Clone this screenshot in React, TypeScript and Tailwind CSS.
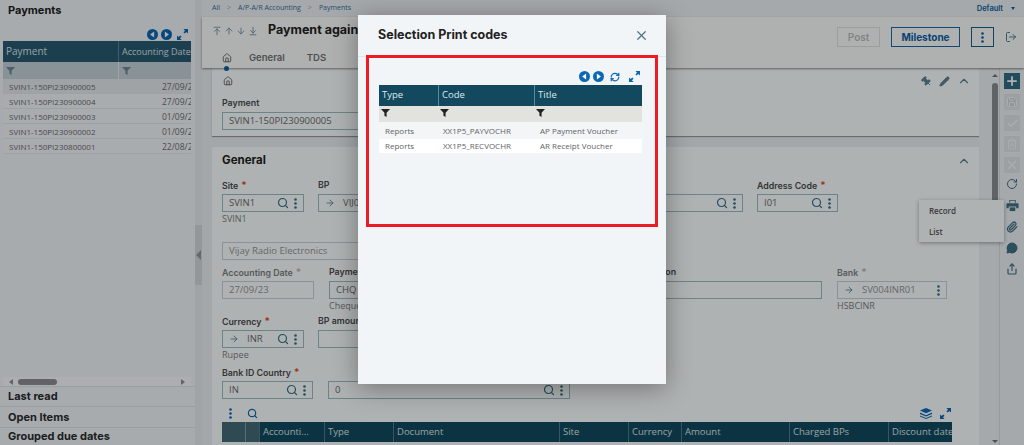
import React from 'react';
import {
  ArrowDown,
  ArrowDownToLine,
  ArrowRight,
  ArrowUp,
  ArrowUpToLine,
  Check,
  ChevronUp,
  House,
  LogOut,
  MessageCircle,
  Paperclip,
  Pencil,
  Pin,
  Plus,
  RefreshCw,
  RotateCw,
  Save,
  Search,
  Share,
  Trash2,
  X,
} from 'lucide-react';

const sans = "font-['Open_Sans',sans-serif]";
const head = "font-['Inter',sans-serif]";

const Funnel = ({ color = '#6f8a94' }: { color?: string }) => (
  <svg width="9" height="9" viewBox="0 0 10 10" className="shrink-0">
    <path d="M0 1h10L6.2 5.2V10L3.8 8.6V5.2z" fill={color} />
  </svg>
);

const NavDot = ({ dir, size = 11 }: { dir: 'left' | 'right'; size?: number }) => (
  <svg width={size} height={size} viewBox="0 0 12 12" className="shrink-0">
    <circle cx="6" cy="6" r="6" fill="#0b68b5" />
    <path d={dir === 'left' ? 'M7.8 2.6v6.8L3.4 6z' : 'M4.2 2.6v6.8L8.6 6z'} fill="#fff" />
  </svg>
);

const Expand = () => (
  <svg width="11" height="11" viewBox="0 0 12 12" className="shrink-0" fill="#0b68b5">
    <path d="M7 0h5v5l-1.8-1.8L8.4 5 7 3.6l1.8-1.8z" />
    <path d="M0 7v5h5l-1.8-1.8L5 8.4 3.6 7 1.8 8.8z" />
  </svg>
);

const Dots = ({ color = '#34718a' }: { color?: string }) => (
  <svg width="3" height="11" viewBox="0 0 3 11" className="shrink-0" fill={color}>
    <circle cx="1.5" cy="1.5" r="1.3" />
    <circle cx="1.5" cy="5.5" r="1.3" />
    <circle cx="1.5" cy="9.5" r="1.3" />
  </svg>
);

const PrinterIcon = () => (
  <svg width="13" height="13" viewBox="0 0 14 14" fill="#3f7185">
    <path d="M3.5 1h7v3h-1V2h-5v2h-1z" />
    <path d="M1.5 4.5h11a1 1 0 0 1 1 1V10h-2.5V8H3v2H.5V5.5a1 1 0 0 1 1-1z" />
    <path d="M4 9h6v4H4z" />
  </svg>
);

const Lens = () => <Search size={12} strokeWidth={2.4} color="#34718a" className="shrink-0" />;

type FieldProps = {
  label: string;
  value?: string;
  width: string;
  star?: 'red' | 'grey';
  arrow?: boolean;
  lookup?: boolean;
  menu?: boolean;
  disabled?: boolean;
  note?: string;
};

const Box = ({ value, arrow, lookup, menu, disabled }: Partial<FieldProps>) => (
  <div className={`mt-[3px] flex h-[18px] items-center gap-[5px] border px-[6px] ${disabled ? 'border-[#c6d2d6]' : 'border-[#9dbcc6]'}`}>
    {arrow && <ArrowRight size={10} color="#4b7d91" className="mr-[3px] shrink-0" />}
    <span className={`${sans} flex-1 truncate text-[9.5px] ${disabled ? 'text-[#909598]' : 'text-[#676b6e]'}`}>{value}</span>
    {lookup && <Lens />}
    {menu && <Dots />}
  </div>
);

const Field = ({ label, value, width, star, arrow, lookup, menu, disabled, note }: FieldProps) => (
  <div className={`${width} shrink-0`}>
    <div className={`${head} h-[12px] text-[8.8px] leading-[12px] font-semibold whitespace-nowrap ${disabled ? 'text-[#7d8285]' : 'text-[#4a4d4f]'}`}>
      {label}
      {star && <span className={`ml-[3px] text-[10px] ${star === 'red' ? 'text-[#e2492a]' : 'text-[#b5b9bb]'}`}>*</span>}
    </div>
    <Box value={value} arrow={arrow} lookup={lookup} menu={menu} disabled={disabled} />
    {note && <div className={`${sans} mt-[1px] text-[9px] leading-[12px] text-[#7a7f82]`}>{note}</div>}
  </div>
);

const sideRows = [
  ['SVIN1-150PI230900005', '27/09/23', 'bg-[#e4eaee]'],
  ['SVIN1-150PI230900004', '27/09/23', 'bg-[#f3f7f9]'],
  ['SVIN1-150PI230900003', '01/09/23', 'bg-[#f3f7f9]'],
  ['SVIN1-150PI230900002', '01/09/23', 'bg-[#f3f7f9]'],
  ['SVIN1-150PI230800001', '22/08/23', 'bg-[#f3f7f9]'],
];

const Sidebar = () => (
  <aside className="flex h-full w-[195px] shrink-0 flex-col bg-[#f0f5f8]">
    <h2 className={`${head} h-[28px] pt-[2px] pl-[8px] text-[11px] leading-[16px] font-bold text-[#222]`}>Payments</h2>
    <div className="flex h-[13px] items-center justify-end pr-[7px]">
      <NavDot dir="left" />
      <span className="ml-[3px]"><NavDot dir="right" /></span>
      <span className="ml-[5px]"><Expand /></span>
    </div>
    <div className={`${sans} mx-[3px] w-[188px] overflow-hidden`}>
      <div className="flex h-[21px] items-center bg-[#285b72] text-[9px] text-[#dbe6ea]">
        <div className="flex h-full w-[116px] shrink-0 items-center border-r border-[#5f8797] pl-[3px] text-[10px]">Payment</div>
        <div className="flex-1 pl-[3px] whitespace-nowrap">Accounting Date</div>
      </div>
      <div className="flex h-[17px] items-center bg-[#c4d2d8]">
        <div className="flex h-full w-[116px] items-center border-r border-[#e6eef1] pl-[3px]"><Funnel /></div>
        <div className="pl-[3px]"><Funnel /></div>
      </div>
      {sideRows.map(([code, date, bg]) => (
        <div key={code} className={`flex h-[15px] items-center border-b border-[#e2e8eb] pt-[2px] text-[8px] text-[#686c6f] ${bg}`}>
          <div className="w-[116px] shrink-0 pl-[6px]">{code}</div>
          <div className="shrink-0 pl-[43px] text-[8.5px] whitespace-nowrap">{date}</div>
        </div>
      ))}
    </div>
    <div className="flex-1" />
    <div className="mx-[3px] flex h-[9px] w-[188px] items-center justify-between bg-[#f7fafb] px-[6px]">
      <span className="h-0 w-0 border-y-[3px] border-r-[4px] border-y-transparent border-r-[#8a9093]" />
      <span className="mr-auto ml-[5px] h-[6px] w-[39px] rounded-full bg-[#8a9093]" />
      <span className="h-0 w-0 border-y-[3px] border-l-[4px] border-y-transparent border-l-[#8a9093]" />
    </div>
    <div className={`${head} flex h-[20px] items-center border-t border-[#dbe2e6] pl-[8px] text-[11px] font-bold text-[#2a2c2e]`}>Last read</div>
    <div className={`${head} flex h-[21px] items-center border-t border-[#dbe2e6] pl-[8px] text-[11px] font-bold text-[#2a2c2e]`}>Open Items</div>
    <div className={`${head} flex h-[18px] items-center border-t border-[#dbe2e6] pl-[8px] text-[11px] font-bold text-[#2a2c2e]`}>Grouped due dates</div>
  </aside>
);

const Splitter = () => (
  <div className="flex h-full w-[7px] shrink-0 flex-col bg-[#e6ebee]">
    <div className="h-[225px] bg-[radial-gradient(#a8afb3_0.6px,transparent_0.7px)] bg-[length:2px_2px]" />
    <div className="flex h-[60px] items-center justify-center bg-[#d3d9dc]">
      <span className="h-0 w-0 border-y-[5px] border-r-[5px] border-y-transparent border-r-[#8f979b]" />
    </div>
    <div className="flex-1 bg-[radial-gradient(#a8afb3_0.6px,transparent_0.7px)] bg-[length:2px_2px]" />
  </div>
);

const TopBar = () => (
  <div className={`${sans} flex h-[17px] items-center bg-[#eef3f6] pr-[9px] pl-[10px] text-[7px] text-[#2f7099]`}>
    <span>All</span>
    <span className="mx-[7px] text-[#9aa3a8]">&gt;</span>
    <span>A/P-A/R Accounting</span>
    <span className="mx-[7px] text-[#9aa3a8]">&gt;</span>
    <span>Payments</span>
    <span className={`${head} ml-auto text-[7.5px] font-semibold text-[#0b5fa5]`}>Default</span>
    <span className="ml-[8px] h-0 w-0 border-x-[2.5px] border-t-[3px] border-x-transparent border-t-[#0b5fa5]" />
  </div>
);

const Header = () => (
  <div className="relative z-[1] flex h-[51px] bg-[#fbfdfd] shadow-[0_1px_2px_rgba(0,0,0,0.45)]">
    <div className="flex flex-1 flex-col pl-[10px]">
      <div className="flex h-[27px] items-center">
        <div className="flex w-[56px] gap-[2px] text-[#6a8e9c]">
          <ArrowUpToLine size={10} />
          <ArrowUp size={10} />
          <ArrowDown size={10} />
          <ArrowDownToLine size={10} />
        </div>
        <h1 className={`${head} text-[12.5px] font-bold whitespace-nowrap text-[#222]`}>Payment against</h1>
      </div>
      <div className={`${head} relative mt-[4px] flex h-[20px] items-center text-[9.5px] font-semibold text-[#6e7375]`}>
        <House size={10} color="#555" className="ml-[10px]" />
        <span className="ml-[17px]">General</span>
        <span className="ml-[22px]">TDS</span>
        <span className="absolute bottom-[-3px] left-[12px] h-[5px] w-[5px] rounded-full bg-[#0b5fa5]" />
      </div>
    </div>
    <div className={`${head} flex items-start gap-[11px] pt-[10px] pr-[7px]`}>
      <div className="flex h-[20px] w-[43px] items-center justify-center border border-[#dde2e4] text-[10px] font-semibold text-[#b9bdbf]">Post</div>
      <div className="flex h-[20px] w-[69px] items-center justify-center border border-[#1c6ba8] text-[10px] font-bold text-[#0b5fa5]">Milestone</div>
      <div className="flex h-[20px] w-[23px] items-center justify-center border border-[#1c5f8a]"><Dots color="#0b5fa5" /></div>
      <LogOut size={12} color="#4b7d91" className="mt-[4px]" />
    </div>
  </div>
);

const gridColumns: [string, string][] = [
  ['Accounti...', 'w-[65px]'],
  ['Type', 'w-[69px]'],
  ['Document', 'w-[166px]'],
  ['Site', 'w-[69px]'],
  ['Currency', 'w-[53px]'],
  ['Amount', 'w-[108px]'],
  ['Charged BPs', 'w-[99px]'],
  ['Discount date', 'w-[65px]'],
];

const FormArea = () => (
  <div className="min-w-0 flex-1 overflow-hidden bg-[#eaf0f3] pl-[10px]">
    <section className="h-[68px] bg-[#fbffff] shadow-[0_1px_1px_rgba(0,0,0,0.35)]">
      <div className="flex h-[26px] items-center justify-between px-[8px] pl-[10px]">
        <House size={10} color="#555" className="ml-[1px]" />
        <div className="flex items-center gap-[7px] text-[#5d8191]">
          <Pin size={11} fill="#5d8191" className="-rotate-45" />
          <Pencil size={11} fill="#5d8191" />
          <ChevronUp size={14} />
        </div>
      </div>
      <div className="mt-[3px] pl-[10px]">
        <Field label="Payment" value="SVIN1-150PI230900005" width="w-[190px]" />
      </div>
    </section>
    <section className="mt-[11px] h-[330px] bg-[#fbffff] px-[10px]">
      <div className="flex h-[28px] items-center justify-between">
        <h3 className={`${head} text-[11.5px] font-bold text-[#222]`}>General</h3>
        <ChevronUp size={14} color="#5d8191" className="-mr-[2px]" />
      </div>
      <div className="mt-[4px] flex gap-[14px]">
        <Field label="Site" star="red" value="SVIN1" lookup menu width="w-[82px]" note="SVIN1" />
        <Field label="BP" value="VIJ001" arrow lookup menu width="w-[425px]" />
        <Field label="Address Code" star="red" value="I01" lookup menu width="w-[81px]" />
      </div>
      <div className="mt-[17px] w-[200px]">
        <Box value="Vijay Radio Electronics" disabled />
      </div>
      <div className="mt-[6px] flex gap-[15px]">
        <Field label="Accounting Date" star="grey" value="27/09/23" disabled width="w-[92px]" />
        <Field label="Payment type" value="CHQ" width="w-[100px]" note="Cheque" />
        <div className="ml-[183px]">
          <Field label="Description" width="w-[195px]" />
        </div>
        <Field label="Bank" star="grey" value="SV004INR01" arrow menu disabled width="w-[110px]" note="HSBCINR" />
      </div>
      <div className="mt-[3px] flex gap-[14px]">
        <Field label="Currency" star="red" value="INR" arrow lookup menu width="w-[82px]" note="Rupee" />
        <Field label="BP amount" width="w-[120px]" />
      </div>
      <div className="mt-[5px] flex items-end gap-[15px]">
        <Field label="Bank ID Country" star="red" value="IN" lookup menu width="w-[91px]" />
        <div className="w-[242px]">
          <Box value="0" lookup menu />
        </div>
      </div>
      <div className="mt-[6px] flex h-[16px] items-center pl-[7px]">
        <Dots color="#0b68b5" />
        <span className="ml-[15px]"><Search size={11} strokeWidth={2.6} color="#0b68b5" /></span>
        <svg width="12" height="11" viewBox="0 0 12 11" className="mr-[8px] ml-auto shrink-0" fill="#0b68b5">
          <path d="M6 0l6 2.6L6 5.2 0 2.6z" />
          <path d="M0 4.6l6 2.6 6-2.6v1.4L6 8.6 0 6z" />
          <path d="M0 7.4L6 10l6-2.6v1L6 11 0 8.4z" />
        </svg>
        <span className="mr-[18px]"><Expand /></span>
      </div>
      <div className={`${sans} mt-[1px] flex h-[20px] w-[730px] items-center overflow-hidden text-[9.5px] text-[#dce7ea]`}>
        <div className="h-full w-[24px] shrink-0 border-r border-[#7f9da8] bg-[#456a79]" />
        <div className="h-full w-[13px] shrink-0 bg-[#456a79]" />
        {gridColumns.map(([title, w]) => (
          <div key={title} className={`${w} flex h-full shrink-0 items-center border-l border-[#4f7b8d] bg-[#11495f] pl-[3px] whitespace-nowrap`}>
            {title}
          </div>
        ))}
      </div>
    </section>
  </div>
);

const ToolBtn = ({ children, active }: { children: React.ReactNode; active?: boolean }) => (
  <div className={`flex h-[16px] w-[16px] items-center justify-center ${active ? 'bg-[#2f6e85]' : 'bg-[#e0e6e8]'}`}>{children}</div>
);

const Toolbar = () => (
  <div className="flex w-[25px] shrink-0 flex-col items-center border-l border-[#d5dcdf] bg-[#eef3f6] pt-[5px] pl-[4px] pr-[4px]">
    <ToolBtn active><Plus size={14} strokeWidth={3} color="#fff" /></ToolBtn>
    <div className="mt-[5px] flex flex-col gap-[5px]">
      <ToolBtn><Save size={12} color="#f5f7f8" fill="#d0d8db" /></ToolBtn>
      <ToolBtn><Check size={13} strokeWidth={3} color="#f5f7f8" /></ToolBtn>
      <ToolBtn><Trash2 size={12} color="#f5f7f8" /></ToolBtn>
      <ToolBtn><X size={14} strokeWidth={2.4} color="#f5f7f8" /></ToolBtn>
    </div>
    <div className="mt-[5px] flex flex-col items-center gap-[9px] text-[#3f7185]">
      <RotateCw size={12} />
      <PrinterIcon />
      <Paperclip size={12} strokeWidth={2.6} />
      <MessageCircle size={12} fill="#3f7185" />
      <Share size={12} strokeWidth={2.4} />
    </div>
  </div>
);

const Scrollbar = () => (
  <div className="flex w-[20px] shrink-0 flex-col items-center bg-[#eef3f6] pr-[1px] pl-[13px]">
    <span className="mt-[6px] h-0 w-0 border-x-[3px] border-b-[3px] border-x-transparent border-b-[#6d7478]" />
    <div className="mt-[6px] h-[140px] w-[6px] shrink-0 rounded-full bg-[#8a8f92]" />
    <div className="flex-1" />
    <span className="mb-[2px] h-0 w-0 border-x-[3px] border-t-[3px] border-x-transparent border-t-[#6d7478]" />
  </div>
);

const PrintCodes = () => (
  <div className="absolute top-[15px] left-[358px] z-20 h-[369px] w-[308px] bg-[#f2f5f7] shadow-[0_4px_24px_rgba(0,0,0,0.35)]">
    <div className="flex h-[42px] items-center justify-between border-b border-[#dfe4e7] pr-[17px] pl-[20px]">
      <h2 className={`${head} text-[12.5px] font-bold text-[#222]`}>Selection Print codes</h2>
      <X size={15} color="#4e7686" />
    </div>
    <div className="mx-[8px] -mt-[2px] h-[172px] border-[3px] border-[#ed1c24] px-[10px] pt-[12px]">
      <div className="flex h-[13px] items-center justify-end pr-[5px]">
        <NavDot dir="left" />
        <span className="ml-[3px]"><NavDot dir="right" /></span>
        <RefreshCw size={10} strokeWidth={3} color="#0b68b5" className="ml-[6px]" />
        <span className="ml-[9px]"><Expand /></span>
      </div>
      <div className={`${sans} mt-[2px] w-[263px]`}>
        <div className="flex h-[21px] items-center bg-[#12495f] text-[9.5px] text-[#dfe9ec]">
          <div className="flex h-full w-[59px] items-center pl-[3px]">Type</div>
          <div className="flex h-full w-[96px] items-center border-l border-[#5f8797] pl-[3px]">Code</div>
          <div className="flex h-full flex-1 items-center border-l border-[#5f8797] pl-[3px]">Title</div>
        </div>
        <div className="flex h-[16px] items-start bg-[#e2e3df] pt-[2px]">
          <div className="w-[59px] pl-[2px]"><Funnel color="#222" /></div>
          <div className="w-[96px] pl-[2px]"><Funnel color="#222" /></div>
          <div className="pl-[2px]"><Funnel color="#222" /></div>
        </div>
        <div className="flex h-[17px] items-center bg-[#f4f5f6] text-[8px] text-[#5f6366]">
          <div className="w-[59px] pl-[6px]">Reports</div>
          <div className="w-[96px] pl-[5px]">XX1P5_PAYVOCHR</div>
          <div className="pl-[6px]">AP Payment Voucher</div>
        </div>
        <div className="flex h-[14px] items-center bg-white text-[8px] text-[#5f6366]">
          <div className="w-[59px] pl-[6px]">Reports</div>
          <div className="w-[96px] pl-[5px]">XX1P5_RECVOCHR</div>
          <div className="pl-[6px]">AR Receipt Voucher</div>
        </div>
      </div>
    </div>
  </div>
);

const App: React.FC = () => {
  return (
    <div className="relative flex h-[445px] w-[1024px] overflow-hidden bg-[#eaf0f3]">
      <Sidebar />
      <Splitter />
      <main className="flex h-full min-w-0 flex-1 flex-col">
        <TopBar />
        <Header />
        <div className="flex min-h-0 flex-1">
          <FormArea />
          <Scrollbar />
          <Toolbar />
        </div>
      </main>

      {/* Record / List menu opened from the print icon */}
      <div className={`${sans} absolute top-[200px] left-[919px] z-[5] flex h-[42px] w-[85px] flex-col justify-around bg-[#fbffff] pt-[1px] pl-[10px] text-[8px] font-semibold text-[#555] shadow-[0_1px_4px_rgba(0,0,0,0.35)]`}>
        <span>Record</span>
        <span>List</span>
      </div>

      <div className="absolute inset-0 z-10 bg-black/30" />
      <PrintCodes />
    </div>
  );
};

export default App;
